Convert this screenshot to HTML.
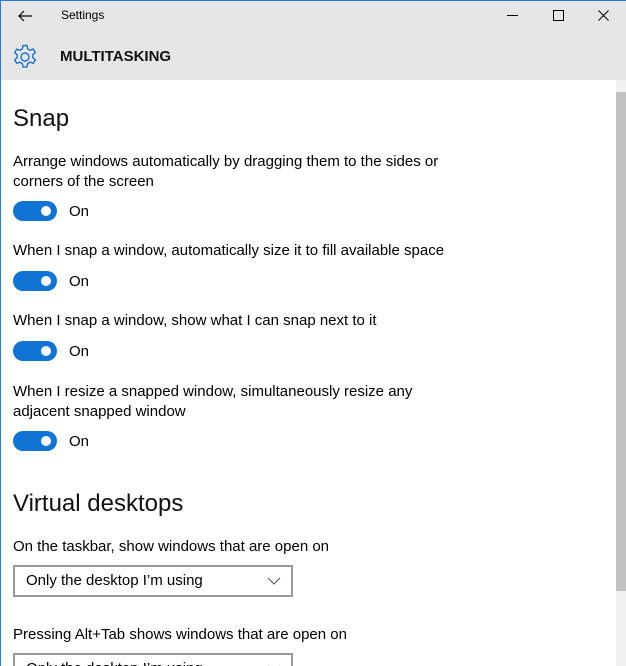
<!DOCTYPE html>
<html style="width:626px;height:666px;overflow:hidden"><head><style>
*{margin:0;padding:0;box-sizing:border-box}
body{width:626px;height:666px;overflow:hidden;background:#fff;font-family:"Liberation Sans",sans-serif;color:#000;position:relative}
.frame{position:absolute;left:0;top:0;width:626px;height:666px;border-left:1px solid #2b7bd0;border-top:1px solid #2b7bd0}
.top{position:absolute;left:1px;top:1px;width:625px;height:79px;background:#e6e6e6}
.abs{position:absolute;white-space:nowrap}
.t{font-size:15px;color:#000}
.h{font-size:24px;color:#111}
.tog{position:absolute;left:13px;width:44px;height:20px;border-radius:10px;background:#0f74d4}
.tog:after{content:"";position:absolute;right:6px;top:5px;width:10px;height:10px;border-radius:50%;background:#fff}
.on{position:absolute;left:69px;font-size:15px}
.sel{position:absolute;left:13px;width:280px;height:32px;border:2px solid #999;font-size:15px;padding:5px 0 0 11px}
.sel svg{position:absolute;right:10px;top:10px}
</style></head><body>
<div class="top"></div>
<div class="frame"></div>
<svg class="abs" style="left:17px;top:9px" width="16" height="14"><path d="M15 7H2M7 2L2 7l5 5" stroke="#000" stroke-width="1.2" fill="none"/></svg>
<div class="abs" style="left:61px;top:8px;font-size:12px">Settings</div>
<svg class="abs" style="left:507px;top:15px" width="12" height="2"><rect width="11" height="1" fill="#000"/></svg>
<svg class="abs" style="left:553px;top:10px" width="12" height="12"><rect x=".5" y=".5" width="10" height="10" stroke="#000" fill="none"/></svg>
<svg class="abs" style="left:598px;top:10px" width="12" height="12"><path d="M.5 .5l10 10M10.5 .5l-10 10" stroke="#000"/></svg>
<svg class="abs" style="left:12px;top:44px" width="26" height="26" viewBox="0 0 26 26"><g fill="none" stroke="#1a73d0" stroke-width="1.4"><path d="M11 1.5h4l.7 3.3 2.4 1.4 3.2-1.1 2 3.4-2.5 2.3v2.8l2.5 2.3-2 3.4-3.2-1.1-2.4 1.4-.7 3.3h-4l-.7-3.3-2.4-1.4-3.2 1.1-2-3.4 2.5-2.3v-2.8L2.7 8.6l2-3.4 3.2 1.1 2.4-1.4z"/><circle cx="13" cy="13" r="4"/></g></svg>
<div class="abs" style="left:60px;top:48px;font-size:15px;font-weight:bold;color:#111">MULTITASKING</div>
<div class="abs" style="left:616px;top:80px;width:10px;height:586px;background:#f0f0f0"></div>
<div class="abs" style="left:616px;top:92px;width:10px;height:499px;background:#c2c2c2"></div>
<div class="abs h" style="left:13px;top:105px">Snap</div>
<div class="abs t" style="left:13px;top:152px;line-height:20px">Arrange windows automatically by dragging them to the sides or<br>corners of the screen</div>
<div class="tog" style="top:201px"></div><div class="on" style="top:203px">On</div>
<div class="abs t" style="left:13px;top:242px">When I snap a window, automatically size it to fill available space</div>
<div class="tog" style="top:271px"></div><div class="on" style="top:273px">On</div>
<div class="abs t" style="left:13px;top:312px">When I snap a window, show what I can snap next to it</div>
<div class="tog" style="top:341px"></div><div class="on" style="top:343px">On</div>
<div class="abs t" style="left:13px;top:382px;line-height:20px">When I resize a snapped window, simultaneously resize any<br>adjacent snapped window</div>
<div class="tog" style="top:431px"></div><div class="on" style="top:433px">On</div>
<div class="abs h" style="left:13px;top:490px">Virtual desktops</div>
<div class="abs t" style="left:13px;top:538px">On the taskbar, show windows that are open on</div>
<div class="sel" style="top:565px">Only the desktop I’m using<svg width="14" height="8"><path d="M1 1l6 6 6-6" stroke="#555" fill="none"/></svg></div>
<div class="abs t" style="left:13px;top:626px">Pressing Alt+Tab shows windows that are open on</div>
<div class="sel" style="top:653px">Only the desktop I’m using<svg width="14" height="8"><path d="M1 1l6 6 6-6" stroke="#555" fill="none"/></svg></div>
</body></html>
